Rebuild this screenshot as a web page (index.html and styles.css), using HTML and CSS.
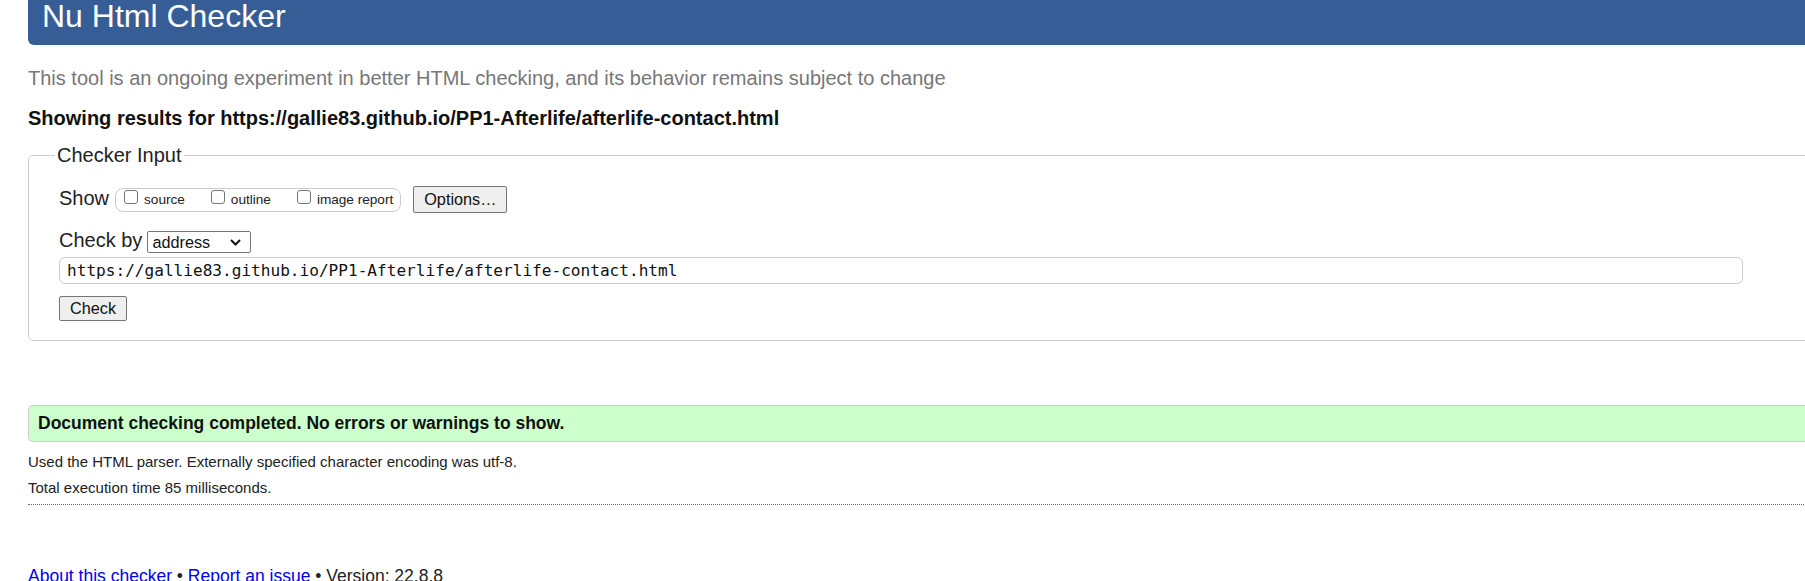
FILE: index.html
```html
<!DOCTYPE html>
<html lang="en">
<head>
<meta charset="utf-8">
<title>Showing results for https://gallie83.github.io/PP1-Afterlife/afterlife-contact.html - Nu Html Checker</title>
<link rel="stylesheet" href="styles.css">
</head>
<body>
<div class="page">
  <header class="masthead"><h1>Nu Html Checker</h1></header>
  <p class="intro">This tool is an ongoing experiment in better HTML checking, and its behavior remains subject to change</p>
  <p class="results-for">Showing results for https://gallie83.github.io/PP1-Afterlife/afterlife-contact.html</p>
  <form class="checker-form">
    <fieldset class="checker">
      <legend>Checker Input</legend>
      <div class="row show-row">
        <span class="lbl">Show</span>
        <div class="show-group">
          <label class="opt"><input type="checkbox" class="cb">source</label>
          <label class="opt"><input type="checkbox" class="cb">outline</label>
          <label class="opt"><input type="checkbox" class="cb">image report</label>
        </div>
        <button type="button" class="btn btn-options">Options…</button>
      </div>
      <div class="row by-row">
        <span class="lbl lbl-by">Check by</span>
        <div class="select"><span>address</span><svg class="chev" width="11" height="7" viewBox="0 0 11 7"><polyline points="1,1 5.5,5.5 10,1" fill="none" stroke="#111" stroke-width="2"/></svg></div>
      </div>
      <input class="url" type="text" value="https://gallie83.github.io/PP1-Afterlife/afterlife-contact.html">
      <div class="submit-row"><button type="button" class="btn btn-check">Check</button></div>
    </fieldset>
  </form>
  <p class="success">Document checking completed. No errors or warnings to show.</p>
  <p class="meta">Used the HTML parser. Externally specified character encoding was utf-8.</p>
  <p class="meta">Total execution time 85 milliseconds.</p>
  <hr class="dotted">
  <p class="footer"><a href="#">About this checker</a> • <a href="#">Report an issue</a> • Version: 22.8.8</p>
</div>
</body>
</html>
```
FILE: styles.css
```css
html, body {
  margin: 0;
  padding: 0;
  overflow: hidden;
  background: #fff;
}
body {
  font-family: "Liberation Sans", Arial, sans-serif;
  color: #222;
}
.page {
  width: 1900px;
  padding-left: 28px;
}
.masthead {
  height: 45px;
  background: #365d95;
  border-bottom-left-radius: 6px;
  padding-left: 14px;
}
.masthead h1 {
  margin: 0;
  font-size: 32px;
  line-height: 32px;
  font-weight: normal;
  color: #fff;
}
.intro {
  margin: 22px 0 0;
  font-size: 20px;
  line-height: 23px;
  color: #777;
}
.results-for {
  margin: 17px 0 0;
  font-size: 20px;
  line-height: 22px;
  font-weight: bold;
  color: #111;
}
.checker-form {
  margin: 15px 0 0;
}
.checker {
  margin: 0;
  border: 1px solid #ccc;
  border-radius: 5px;
  padding: 20px 30px 19px 30px;
}
.checker legend {
  font-size: 20px;
  line-height: 22px;
  padding: 0 2px;
  margin-left: -4px;
  color: #222;
}
.row {
  display: flex;
  align-items: flex-start;
}
.lbl {
  font-size: 20px;
  line-height: 24px;
}
.show-row .lbl {
  margin-right: 6px;
}
.show-group {
  margin-top: 2px;
  height: 22px;
  border: 1px solid #ccc;
  border-radius: 8px;
  padding: 0 7px 0 8px;
  display: flex;
  gap: 26px;
}
.opt {
  display: flex;
  align-items: flex-start;
  font-size: 13.6px;
  line-height: 22px;
  color: #222;
}
.cb {
  -webkit-appearance: none;
  appearance: none;
  width: 14px;
  height: 14px;
  margin: 1px 6px 0 0;
  border: 1px solid #767676;
  border-radius: 3px;
  background: #fff;
  box-sizing: border-box;
}
.btn {
  font-family: "Liberation Sans", Arial, sans-serif;
  font-size: 16.25px;
  line-height: 19px;
  color: #111;
  background: #efefef;
  border: 1px solid #767676;
  border-radius: 2px;
  padding: 3px 10px;
  margin: 0;
}
.btn-options {
  margin-left: 12px;
}
.btn-check {
  padding: 2px 10px;
  line-height: 19px;
}
.by-row {
  margin-top: 18px;
}
.lbl-by {
  line-height: 18px;
  margin-right: 5px;
}
.select {
  box-sizing: border-box;
  width: 104px;
  height: 22px;
  border: 1px solid #767676;
  border-radius: 2px;
  padding: 0 9px 0 4px;
  display: flex;
  align-items: center;
  justify-content: space-between;
  font-size: 16.25px;
  color: #111;
  background: #fff;
}
.chev {
  display: block;
}
.url {
  display: block;
  box-sizing: border-box;
  width: 1684px;
  height: 27px;
  margin: 4px 0 0;
  border: 1px solid #ccc;
  border-radius: 6px;
  padding: 0 7px;
  font-family: "DejaVu Sans Mono", "Liberation Mono", monospace;
  font-size: 16.1px;
  color: #111;
  background: #fff;
}
.submit-row {
  margin-top: 12px;
  display: flex;
}
.success {
  margin: 64px 0 0;
  height: 35px;
  border: 1px solid #ccc;
  border-right: none;
  border-radius: 5px 0 0 5px;
  background: #ccffcc;
  padding: 0 0 0 9px;
  font-size: 17.5px;
  line-height: 35px;
  font-weight: bold;
  color: #111;
}
.meta {
  margin: 0;
  font-size: 15px;
  line-height: 17px;
  color: #222;
}
.success + .meta {
  margin-top: 11px;
}
.meta + .meta {
  margin-top: 9px;
}
.dotted {
  margin: 8px 0 0;
  border: none;
  border-top: 1px dotted #666;
  height: 0;
}
.footer {
  margin: 60px 0 0;
  font-size: 17.5px;
  line-height: 22px;
  color: #222;
}
.footer a {
  color: #0000ee;
  text-decoration: none;
}
```
